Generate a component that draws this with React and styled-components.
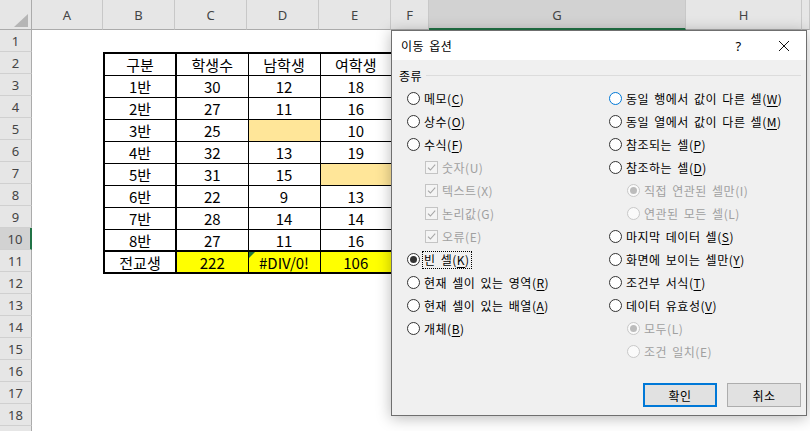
import React from 'react';
import styled, { createGlobalStyle, css } from 'styled-components';

const Global = createGlobalStyle`
  html, body { margin: 0; padding: 0; background: #fff; }
  body { width: 810px; height: 431px; overflow: hidden; font-family: "Noto Sans CJK KR", "Noto Sans", sans-serif; }
  * { box-sizing: border-box; }
`;

const Screen = styled.div`
  position: relative;
  width: 810px;
  height: 431px;
  overflow: hidden;
  background: #fff;
`;

const Sheet = styled.div`
  display: grid;
  grid-template-columns: 32px 71px 72px 72px 72px 72px 38px 257px 116px 1fr;
  grid-template-rows: 30px repeat(19, 22px);
  width: 810px;
  height: 431px;
`;

const Corner = styled.div`
  grid-row: 1;
  grid-column: 1;
  background: #e6e6e6;
  border-right: 1px solid #ababab;
  border-bottom: 1px solid #ababab;
  display: flex;
  justify-content: flex-end;
  align-items: flex-end;
  padding: 0 3px 2px 0;
  &::after {
    content: '';
    display: block;
    width: 0;
    height: 0;
    border-left: 14px solid transparent;
    border-bottom: 13px solid #b5b5b5;
  }
`;

const ColHeader = styled.div`
  grid-row: 1;
  grid-column: ${(p) => p.$col};
  background: ${(p) => (p.$selected ? '#d2d2d2' : '#e6e6e6')};
  border-right: 1px solid #c8c8c8;
  border-bottom: ${(p) => (p.$selected ? '2px solid #217346' : '1px solid #ababab')};
  display: flex;
  align-items: center;
  justify-content: center;
  padding-top: ${(p) => (p.$selected ? '1px' : '0')};
  font-family: "Noto Sans", sans-serif;
  font-size: 13px;
  color: #444;
`;

const RowHeader = styled.div`
  grid-column: 1;
  grid-row: ${(p) => p.$row};
  background: ${(p) => (p.$selected ? '#d2d2d2' : '#e6e6e6')};
  border-right: ${(p) => (p.$selected ? '2px solid #217346' : '1px solid #ababab')};
  border-bottom: 1px solid #d0d0d0;
  display: flex;
  align-items: center;
  justify-content: center;
  font-family: "Noto Sans", sans-serif;
  font-size: 13px;
  color: #444;
`;

const DataTable = styled.table`
  grid-column: 3 / 7;
  grid-row: 3 / 13;
  border-collapse: collapse;
  table-layout: fixed;
  width: 288px;
  height: 220px;
  border: 2px solid #000;
`;

const Row = styled.tr`
  height: 22px;
`;

const fills = { none: 'transparent', orange: '#ffe699', yellow: '#ffff00' };

const Cell = styled.td`
  width: 72px;
  padding: 2px 0 0;
  border: 1px solid #000;
  ${(p) => p.$first && css`border-right: 2px solid #000;`}
  ${(p) => p.$total && css`border-top: 2px solid #000;`}
  background: ${(p) => fills[p.$fill || 'none']};
  text-align: center;
  vertical-align: middle;
  font-family: "Noto Sans CJK KR", sans-serif;
  font-size: 15px;
  line-height: 18px;
  color: #000;
  position: relative;
  ${(p) =>
    p.$flag &&
    css`
      &::before {
        content: '';
        position: absolute;
        left: 0;
        top: 0;
        border-top: 6px solid #1f7a3a;
        border-right: 6px solid transparent;
      }
    `}
`;

/* ---------- Dialog ---------- */

const Dialog = styled.div`
  position: absolute;
  left: 391px;
  top: 30px;
  width: 416px;
  height: 386px;
  border: 1px solid #6f6f6f;
  background: #f0f0f0;
  box-shadow: 0 2px 14px rgba(0, 0, 0, 0.28);
  display: flex;
  flex-direction: column;
  font-family: "Noto Sans CJK KR", sans-serif;
  font-size: 12px;
  letter-spacing: 0.5px;
  word-spacing: 2px;
  color: #000;
`;

const TitleBar = styled.div`
  height: 29px;
  background: #fff;
  display: flex;
  align-items: center;
  padding-left: 9px;
  flex-shrink: 0;
`;

const Title = styled.div`
  flex: 1;
  font-size: 12px;
  line-height: 16px;
  padding-top: 1px;
`;

const TitleButton = styled.div`
  width: 45px;
  height: 29px;
  display: flex;
  align-items: center;
  justify-content: center;
  font-family: "Noto Sans", sans-serif;
  font-size: 13px;
`;

const Body = styled.div`
  flex: 1;
  display: flex;
  flex-direction: column;
  padding: 6px 5px 8px 7px;
`;

const GroupHeader = styled.div`
  height: 18px;
  display: flex;
  align-items: center;
  gap: 4px;
`;

const GroupLine = styled.div`
  flex: 1;
  height: 1px;
  background: #dcdcdc;
`;

const Options = styled.div`
  display: grid;
  grid-template-columns: 202px 1fr;
  margin-top: 3px;
  padding-left: 8px;
`;

const OptionColumn = styled.div`
  display: flex;
  flex-direction: column;
`;

const OptionRow = styled.div`
  height: 23px;
  display: flex;
  align-items: center;
  gap: 4px;
  padding-left: ${(p) => (p.$sub ? '18px' : '0')};
  color: ${(p) => (p.$disabled ? '#a0a0a0' : '#000')};
  white-space: nowrap;
`;

const Radio = styled.span`
  width: 13px;
  height: 13px;
  border-radius: 50%;
  flex-shrink: 0;
  display: flex;
  align-items: center;
  justify-content: center;
  background: ${(p) => (p.$disabled ? '#fafafa' : '#fff')};
  border: 1px solid ${(p) => (p.$disabled ? '#c8c8c8' : p.$hover ? '#0078d7' : '#333')};
  &::after {
    content: '';
    display: ${(p) => (p.$checked ? 'block' : 'none')};
    width: 7px;
    height: 7px;
    border-radius: 50%;
    background: ${(p) => (p.$disabled ? '#bcbcbc' : '#333')};
  }
`;

const CheckBox = styled.span`
  width: 13px;
  height: 13px;
  flex-shrink: 0;
  border: 1px solid #c4c4c4;
  background: #f4f4f4;
  display: flex;
  align-items: center;
  justify-content: center;
`;

const Label = styled.span`
  font-size: 12px;
  line-height: 16px;
  padding: 0 1px;
  margin-left: -1px;
  ${(p) => p.$focus && css`outline: 1px dotted #000; outline-offset: 0;`}
`;

const Key = styled.span`
  text-decoration: ${(p) => (p.$disabled ? 'none' : 'underline')};
  text-underline-offset: 2px;
`;

const Spacer = styled.div`
  flex: 1;
`;

const ButtonRow = styled.div`
  display: flex;
  justify-content: flex-end;
  gap: 10px;
`;

const Button = styled.div`
  width: 74px;
  height: 24px;
  display: flex;
  align-items: center;
  justify-content: center;
  background: #e1e1e1;
  border: ${(p) => (p.$primary ? '2px solid #0078d7' : '1px solid #adadad')};
  font-size: 12px;
`;

const columns = ['', 'A', 'B', 'C', 'D', 'E', 'F', 'G', 'H', ''];

const tableRows = [
  [['구분'], ['학생수'], ['남학생'], ['여학생']],
  [['1반'], ['30'], ['12'], ['18']],
  [['2반'], ['27'], ['11'], ['16']],
  [['3반'], ['25'], ['', 'orange'], ['10']],
  [['4반'], ['32'], ['13'], ['19']],
  [['5반'], ['31'], ['15'], ['', 'orange']],
  [['6반'], ['22'], ['9'], ['13']],
  [['7반'], ['28'], ['14'], ['14']],
  [['8반'], ['27'], ['11'], ['16']],
  [['전교생'], ['222', 'yellow'], ['#DIV/0!', 'yellow', true], ['106', 'yellow']],
];

const leftOptions = [
  { label: '메모', k: 'C' },
  { label: '상수', k: 'O' },
  { label: '수식', k: 'F' },
  { label: '숫자', k: 'U', check: true, sub: true, disabled: true },
  { label: '텍스트', k: 'X', check: true, sub: true, disabled: true },
  { label: '논리값', k: 'G', check: true, sub: true, disabled: true },
  { label: '오류', k: 'E', check: true, sub: true, disabled: true },
  { label: '빈 셀', k: 'K', checked: true, focus: true },
  { label: '현재 셀이 있는 영역', k: 'R' },
  { label: '현재 셀이 있는 배열', k: 'A' },
  { label: '개체', k: 'B' },
];

const rightOptions = [
  { label: '동일 행에서 값이 다른 셀', k: 'W', hover: true },
  { label: '동일 열에서 값이 다른 셀', k: 'M' },
  { label: '참조되는 셀', k: 'P' },
  { label: '참조하는 셀', k: 'D' },
  { label: '직접 연관된 셀만', k: 'I', sub: true, disabled: true, checked: true },
  { label: '연관된 모든 셀', k: 'L', sub: true, disabled: true },
  { label: '마지막 데이터 셀', k: 'S' },
  { label: '화면에 보이는 셀만', k: 'Y' },
  { label: '조건부 서식', k: 'T' },
  { label: '데이터 유효성', k: 'V' },
  { label: '모두', k: 'L', sub: true, disabled: true, checked: true },
  { label: '조건 일치', k: 'E', sub: true, disabled: true },
];

function CheckMark() {
  return (
    <svg width="11" height="11" viewBox="0 0 11 11">
      <path d="M2 5.6 L4.4 8 L9.2 2.6" fill="none" stroke="#a6a6a6" strokeWidth="1.1" />
    </svg>
  );
}

function CloseIcon() {
  return (
    <svg width="12" height="12" viewBox="0 0 12 12">
      <path d="M1 1 L11 11 M11 1 L1 11" stroke="#111" strokeWidth="1" fill="none" />
    </svg>
  );
}

function Option({ o }) {
  return (
    <OptionRow $sub={o.sub} $disabled={o.disabled}>
      {o.check ? (
        <CheckBox>
          <CheckMark />
        </CheckBox>
      ) : (
        <Radio $checked={o.checked} $disabled={o.disabled} $hover={o.hover} />
      )}
      <Label $focus={o.focus}>
        {o.label}(<Key $disabled={o.disabled}>{o.k}</Key>)
      </Label>
    </OptionRow>
  );
}

export default function App() {
  return (
    <Screen>
      <Global />
      <Sheet>
        <Corner />
        {columns.slice(1).map((c, i) => (
          <ColHeader key={i} $col={i + 2} $selected={c === 'G'}>
            {c}
          </ColHeader>
        ))}
        {Array.from({ length: 19 }, (_, i) => (
          <RowHeader key={i} $row={i + 2} $selected={i + 1 === 10}>
            {i < 18 ? i + 1 : ''}
          </RowHeader>
        ))}
        <DataTable>
          <tbody>
            {tableRows.map((r, ri) => (
              <Row key={ri}>
                {r.map(([v, fill, flag], ci) => (
                  <Cell
                    key={ci}
                    $first={ci === 0}
                    $total={ri === tableRows.length - 1}
                    $fill={fill}
                    $flag={flag}
                  >
                    {v}
                  </Cell>
                ))}
              </Row>
            ))}
          </tbody>
        </DataTable>
      </Sheet>

      <Dialog>
        <TitleBar>
          <Title>이동 옵션</Title>
          <TitleButton>?</TitleButton>
          <TitleButton>
            <CloseIcon />
          </TitleButton>
        </TitleBar>
        <Body>
          <GroupHeader>
            <span>종류</span>
            <GroupLine />
          </GroupHeader>
          <Options>
            <OptionColumn>
              {leftOptions.map((o, i) => (
                <Option key={i} o={o} />
              ))}
            </OptionColumn>
            <OptionColumn>
              {rightOptions.map((o, i) => (
                <Option key={i} o={o} />
              ))}
            </OptionColumn>
          </Options>
          <Spacer />
          <ButtonRow>
            <Button $primary>확인</Button>
            <Button>취소</Button>
          </ButtonRow>
        </Body>
      </Dialog>
    </Screen>
  );
}
